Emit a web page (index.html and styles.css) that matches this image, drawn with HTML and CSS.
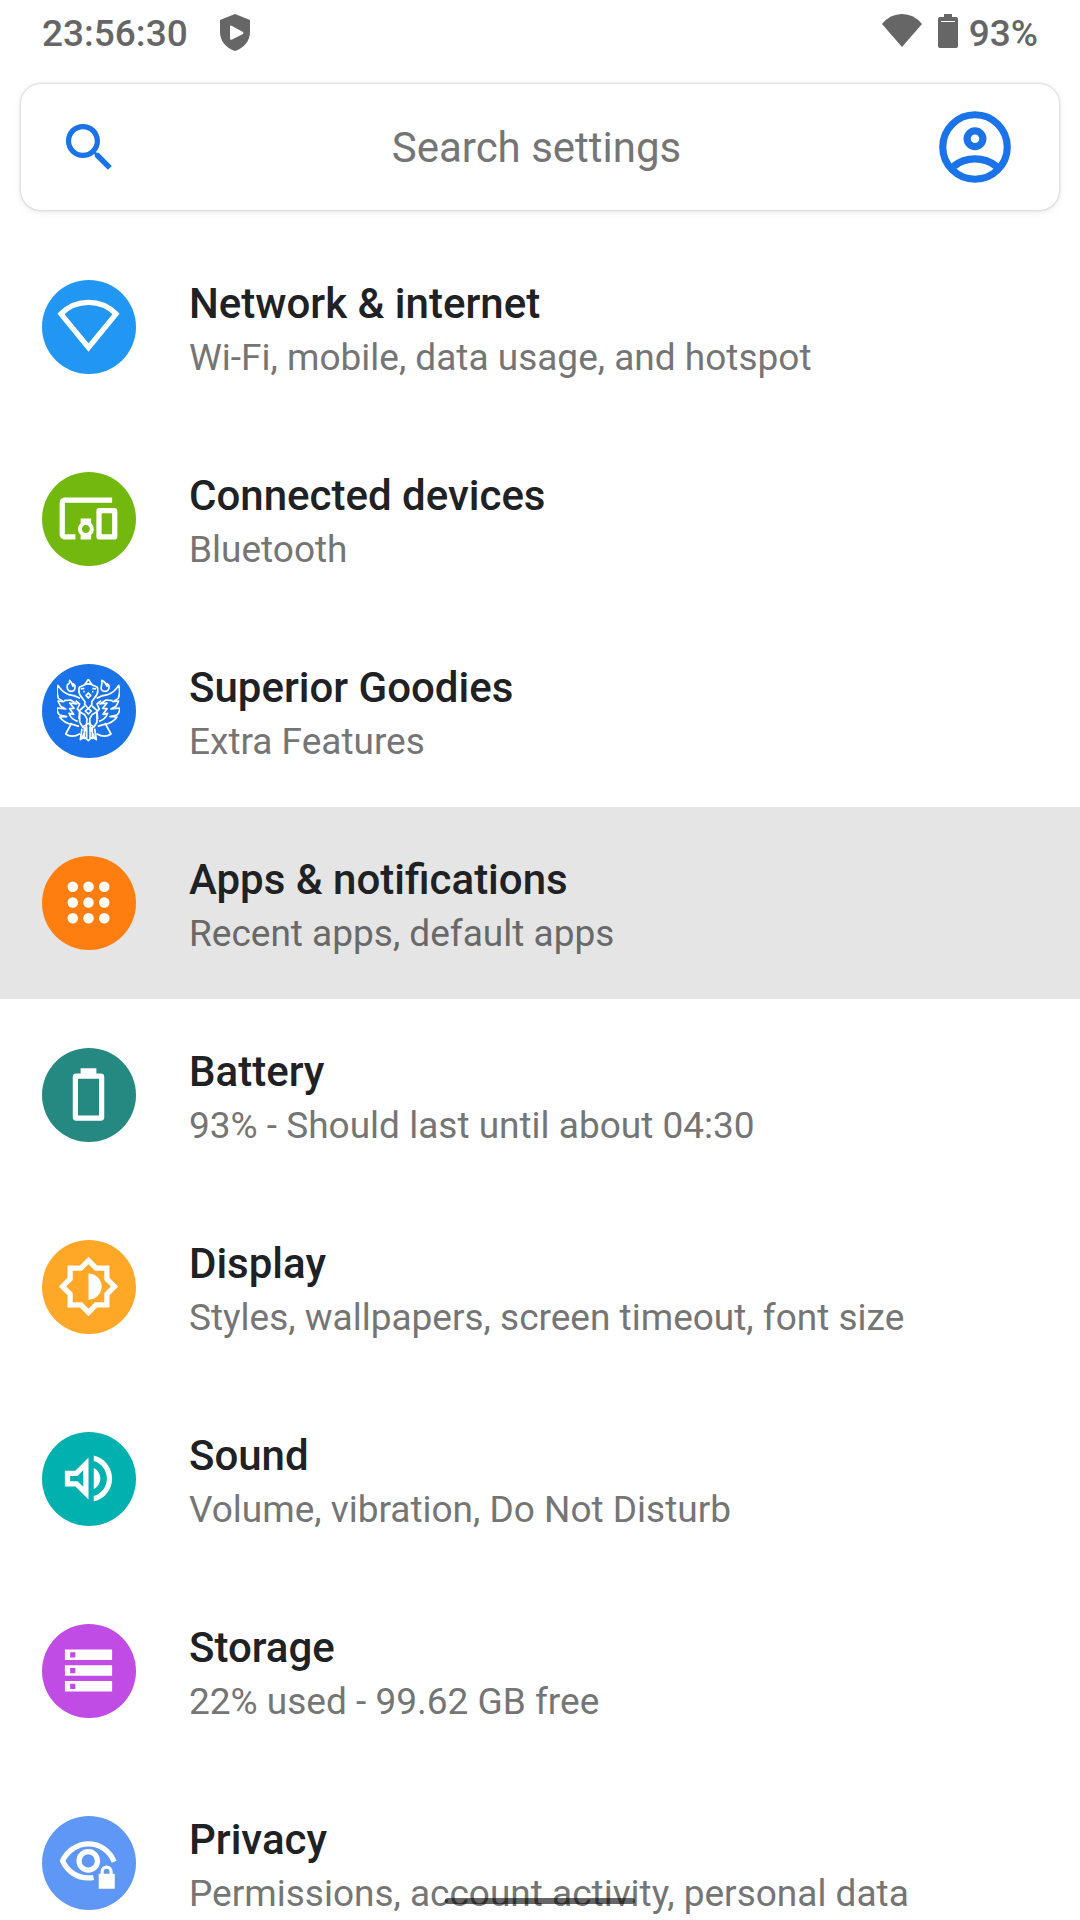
FILE: index.html
```html
<!DOCTYPE html>
<html lang="en">
<head>
  <meta charset="UTF-8">
  <meta name="viewport" content="width=device-width, initial-scale=1.0">
  <title>Settings</title>
  <link rel="stylesheet" href="styles.css">
</head>
<body>

  <header class="status-bar">
    <div class="status-group">
      <time class="clock">23:56:30</time>
      <svg class="shield" viewBox="0 0 30 38">
        <path fill-rule="evenodd" d="M15 0L30 6V18C30 27 24 34 15 37C6 34 0 27 0 18V6ZM10 12.500V24.500Q10 26.500 12 25.500L23 20Q24 19 23 18L12 12Q10 11 10 12.500Z"/>
      </svg>
    </div>
    <div class="status-group status-right">
      <svg class="status-wifi" viewBox="0 0 40 38"><path d="M0 10Q8 0 20 0T40 10L20 33Z"/></svg>
      <svg class="status-battery" viewBox="0 0 20 38">
        <path fill-rule="evenodd" d="M6 0h8v3h4q2 0 2 2v27q0 2-2 2H2q-2 0-2-2V5q0-2 2-2h4zM3 7v1h14V7z"/>
      </svg>
      <span class="level">93%</span>
    </div>
  </header>

  <form class="search">
    <svg class="search-icon" viewBox="0 0 24 24">
      <path d="M15.500 14h-.79l-.28-.27A6.470 6.470 0 0 0 16 9.500 6.500 6.500 0 1 0 9.500 16c1.610 0 3.090-.59 4.230-1.570l.27.28v.79l5 4.990L20.490 19l-4.990-5zm-6 0C7.010 14 5 11.990 5 9.500S7.010 5 9.500 5 14 7.010 14 9.500 11.990 14 9.500 14z"/>
    </svg>
    <input type="text" placeholder="Search settings" aria-label="Search settings">
    <button type="button" class="account" aria-label="Account">
      <svg viewBox="0 0 24 24">
        <circle cx="12" cy="12" r="9"/>
        <circle cx="12" cy="9.700" r="2.200"/>
        <path d="M6 17.400Q8.600 15.300 12 15.300T18 17.400"/>
      </svg>
    </button>
  </form>

  <main class="settings">
    <a href="#network" class="item">
      <span class="icon blue"><svg viewBox="0 0 24 24">
        <path class="line" d="M1.500 7.200Q5.800 2.800 12 2.800T22.500 7.200L12 20Z"/>
      </svg></span>
      <span class="text">
        <span class="title">Network &amp; internet</span>
        <span class="summary">Wi-Fi, mobile, data usage, and hotspot</span>
      </span>
    </a>

    <a href="#devices" class="item">
      <span class="icon green"><svg viewBox="0 0 24 24">
        <path d="M3 6h18V4H3c-1.100 0-2 .9-2 2v12c0 1.100.9 2 2 2h4v-2H3V6zm10 6H9v1.780c-.61.55-1 1.330-1 2.220s.39 1.670 1 2.220V20h4v-1.780c.61-.55 1-1.340 1-2.220s-.39-1.670-1-2.220V12zm-2 5.500c-.83 0-1.500-.67-1.500-1.500s.67-1.500 1.500-1.500 1.500.67 1.500 1.500-.67 1.500-1.500 1.500zM22 8h-6c-.5 0-1 .5-1 1v10c0 .5.5 1 1 1h6c.5 0 1-.5 1-1V9c0-.5-.5-1-1-1zm-1 10h-4v-8h4v8z"/>
      </svg></span>
      <span class="text">
        <span class="title">Connected devices</span>
        <span class="summary">Bluetooth</span>
      </span>
    </a>

    <a href="#goodies" class="item">
      <span class="icon royal"><svg class="phoenix" viewBox="83 89 189 189">
        <!-- head and crest -->
        <path d="M177 90L166 106L150 114Q145 132 158 145L167 157L166 165L177 178L188 165L187 157L196 145Q209 132 204 114L188 106ZM166 106Q177 101 188 106M154 119L165 117M200 119L189 117M170 138L177 131L184 138L177 146ZM162 127h4M188 127h4"/>
        <!-- flames -->
        <path d="M121 93Q122 103 114 106Q111 125 125 126Q139 126 137 109L132 103L131 111Q128 99 121 93ZM217 93Q219 103 217 106Q211 126 227 126Q241 125 239 108L233 103V111Q229 98 217 93Z"/>
        <!-- wings -->
        <path d="M152 147Q136 138 119 136Q99 129 86 108Q80 125 87 147L103 157L86 155L94 171L109 179L83 176Q82 188 91 197L112 202L91 203Q104 222 132 226L149 231M104 154L124 152L142 164L121 161L134 177L121 178L133 195L119 192Q126 211 145 216M139 154L151 164L144 179L151 187L149 209M202 147Q218 138 235 136Q255 129 268 108Q274 125 267 147L251 157L268 155L260 171L245 179L271 176Q272 188 263 197L242 202L263 203Q250 222 222 226L205 231M250 154L230 152L212 164L233 161L220 177L233 178L221 195L235 192Q228 211 209 216M215 154L203 164L210 179L203 187L205 209"/>
        <!-- body and tail -->
        <path d="M166 170L151 183V218L160 233L177 222L194 233L203 218V183L188 170M168 185L177 177L186 185L177 194ZM151 187L166 196L173 209L171 233L158 267M203 187L188 196L181 209L183 233L196 267M165 233V270M172 233V270M182 233V270M189 233V270M127 221L109 254Q128 267 152 253M227 221L245 254Q226 267 202 253M158 238L153 271L165 263L177 274L189 263L201 271L196 238"/>
      </svg></span>
      <span class="text">
        <span class="title">Superior Goodies</span>
        <span class="summary">Extra Features</span>
      </span>
    </a>

    <a href="#apps" class="item active">
      <span class="icon orange"><svg viewBox="0 0 24 24">
        <circle cx="6" cy="6" r="2"/><circle cx="12" cy="6" r="2"/><circle cx="18" cy="6" r="2"/>
        <circle cx="6" cy="12" r="2"/><circle cx="12" cy="12" r="2"/><circle cx="18" cy="12" r="2"/>
        <circle cx="6" cy="18" r="2"/><circle cx="12" cy="18" r="2"/><circle cx="18" cy="18" r="2"/>
      </svg></span>
      <span class="text">
        <span class="title">Apps &amp; notifications</span>
        <span class="summary">Recent apps, default apps</span>
      </span>
    </a>

    <a href="#battery" class="item">
      <span class="icon teal"><svg viewBox="0 0 24 24">
        <path fill-rule="evenodd" d="M9 2h6v2h1.700Q18 4 18 5.300v15.400Q18 22 16.700 22H7.300Q6 22 6 20.700V5.300Q6 4 7.300 4H9zM8 6v14h8V6z"/>
      </svg></span>
      <span class="text">
        <span class="title">Battery</span>
        <span class="summary">93% - Should last until about 04:30</span>
      </span>
    </a>

    <a href="#display" class="item">
      <span class="icon amber"><svg viewBox="0 0 24 24">
        <path fill-rule="evenodd" d="M20 15.310L23.310 12 20 8.690V4h-4.690L12 .69 8.690 4H4v4.690L.69 12 4 15.310V20h4.690L12 23.310 15.310 20H20zM18 14.480V18h-3.520L12 20.480 9.520 18H6v-3.520L3.520 12 6 9.520V6h3.520L12 3.520 14.480 6H18v3.520L20.480 12zM12 7v10a5 5 0 0 0 0-10z"/>
      </svg></span>
      <span class="text">
        <span class="title">Display</span>
        <span class="summary">Styles, wallpapers, screen timeout, font size</span>
      </span>
    </a>

    <a href="#sound" class="item">
      <span class="icon cyan"><svg viewBox="0 0 24 24">
        <path fill-rule="evenodd" d="M3 9v6h4l5 5V4L7 9zM10 8.830v6.340L7.830 13H5v-2h2.830z"/>
        <path d="M16.500 12c0-1.770-1.020-3.290-2.500-4.030v8.050c1.480-.73 2.500-2.250 2.500-4.020zM14 3.230v2.060c2.890.86 5 3.540 5 6.710s-2.110 5.850-5 6.710v2.060c4.010-.91 7-4.490 7-8.770s-2.990-7.860-7-8.770z"/>
      </svg></span>
      <span class="text">
        <span class="title">Sound</span>
        <span class="summary">Volume, vibration, Do Not Disturb</span>
      </span>
    </a>

    <a href="#storage" class="item">
      <span class="icon purple"><svg viewBox="0 0 24 24">
        <path fill-rule="evenodd" d="M3 4h18v4H3zM5 5v2h2V5zM3 10h18v4H3zM5 11v2h2v-2zM3 16h18v4H3zM5 17v2h2v-2z"/>
      </svg></span>
      <span class="text">
        <span class="title">Storage</span>
        <span class="summary">22% used - 99.62 GB free</span>
      </span>
    </a>

    <a href="#privacy" class="item">
      <span class="icon sky"><svg viewBox="0 0 24 24">
        <path class="line" d="M21.800 11.700C20 7.500 16.300 4.900 12 4.900S4 7.500 2.100 11.400C4 15.500 7.700 17.900 12 17.900Q13 17.900 13.900 17.700"/>
        <circle class="line" cx="11.900" cy="11.400" r="3.500"/>
        <path fill-rule="evenodd" d="M15.900 16.300h.7v-.9a2.300 2.300 0 0 1 4.600 0v.9h.8v5.700h-6.100zM17.800 16.300h2.200v-.8a1.100 1.100 0 0 0-2.200 0z"/>
      </svg></span>
      <span class="text">
        <span class="title">Privacy</span>
        <span class="summary">Permissions, account activity, personal data</span>
      </span>
    </a>
  </main>

  <div class="nav-pill"></div>

</body>
</html>
```

FILE: styles.css
```css
* {
  box-sizing: border-box;
}

body {
  margin: 0;
  height: 100vh;
  display: flex;
  flex-direction: column;
  overflow: hidden;
  background-color: #fff;
  font-family: Roboto, sans-serif;
}

svg {
  display: block;
  flex-shrink: 0;
}

/* Status bar */
.status-bar {
  height: 66px;
  flex-shrink: 0;
  display: flex;
  justify-content: space-between;
  align-items: center;
  padding: 0 42px;
  font-size: 37px;
  font-weight: 500;
  color: #666;
}

.status-group {
  display: flex;
  align-items: center;
  gap: 32px;
}

.status-right {
  gap: 16px;
}

.status-bar svg {
  height: 38px;
  fill: #666;
}

.shield {
  width: 30px;
}

.status-wifi {
  width: 40px;
}

.status-battery {
  width: 20px;
}

.level {
  margin-left: -5px;
}

/* Search */
.search {
  flex-shrink: 0;
  height: 126px;
  margin: 18px 21px 21px;
  padding: 0 41px 0 37px;
  display: flex;
  align-items: center;
  border-radius: 20px;
  background-color: #fff;
  box-shadow: 0 0 3px rgba(0, 0, 0, 0.25), 0 2px 8px rgba(0, 0, 0, 0.08);
}

.search-icon {
  width: 63px;
  height: 63px;
  fill: #1a73e8;
}

.search input {
  flex: 1;
  min-width: 0;
  padding: 0 0 0 20px;
  border: none;
  outline: none;
  background: none;
  font-family: inherit;
  font-size: 42px;
  text-align: center;
  color: #202124;
}

.search input::placeholder {
  color: #757575;
  opacity: 1;
}

.account {
  padding: 0;
  border: none;
  background: none;
  cursor: pointer;
}

.account svg {
  width: 86px;
  height: 86px;
  fill: none;
  stroke: #1a73e8;
  stroke-width: 2;
}

/* Settings list */
.settings {
  flex: 1;
  min-height: 0;
  overflow: hidden;
}

.item {
  min-height: 192px;
  padding: 0 42px;
  display: flex;
  align-items: center;
  gap: 53px;
  text-decoration: none;
}

.item.active {
  background-color: #e5e5e5;
}

.icon {
  width: 94px;
  height: 94px;
  padding: 15px;
  flex-shrink: 0;
  border-radius: 50%;
}

.icon svg {
  width: 63px;
  height: 63px;
  fill: #fff;
}

.icon .line {
  fill: none;
  stroke: #fff;
  stroke-width: 2;
}

.icon .phoenix {
  fill: none;
  stroke: #fff;
  stroke-width: 5;
  stroke-linejoin: round;
}

.blue { background-color: #2196f3; }
.green { background-color: #73b80f; }
.royal { background-color: #1a73e8; }
.orange { background-color: #ff7e0f; }
.teal { background-color: #268981; }
.amber { background-color: #ffa727; }
.cyan { background-color: #00b1b0; }
.purple { background-color: #c04be5; }
.sky { background-color: #5e97f6; }

.text {
  display: flex;
  flex-direction: column;
  padding-top: 8px;
}

.title {
  font-size: 42px;
  line-height: 54px;
  font-weight: 500;
  color: #202124;
}

.summary {
  font-size: 37px;
  line-height: 54px;
  color: #757575;
}

.item.active .summary {
  color: #696969;
}

/* Gesture bar over the list */
.nav-pill {
  position: fixed;
  bottom: 16px;
  left: 50%;
  width: 190px;
  height: 6px;
  margin-left: -95px;
  border-radius: 3px;
  background-color: rgba(0, 0, 0, 0.6);
}
```
